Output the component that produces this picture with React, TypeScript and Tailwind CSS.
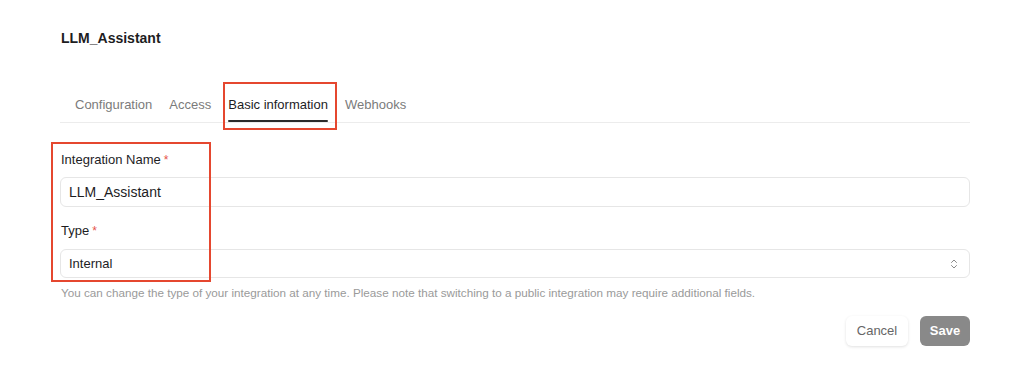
import React from "react";
import { ChevronsUpDown } from "lucide-react";

const font = { fontFamily: '"Liberation Sans", Arial, sans-serif' };

export default function App() {
  const tabs = ["Configuration", "Access", "Basic information", "Webhooks"];
  return (
    <div className="w-[1024px] h-[386px] bg-white text-[#1d1d1f] overflow-hidden" style={font}>
      <div className="pl-[60px] pr-[54px] pt-[28px]">
        <div className="text-[14px] leading-[20px] font-bold pl-[1px]">LLM_Assistant</div>

        <div className="mt-[48px] flex gap-[17px] pl-[15px] border-b border-[#ececec]">
          {tabs.map((t) => {
            const active = t === "Basic information";
            return (
              <div key={t} className="relative flex flex-col items-stretch">
                <span
                  className={
                    "text-[13px] leading-[18px] " +
                    (active ? "text-[#1d1d1f]" : "text-[#7b7b7b]")
                  }
                >
                  {t}
                </span>
                <span
                  className={
                    "mt-[6px] h-[2px] rounded-full " + (active ? "bg-[#2b2b2b]" : "bg-transparent")
                  }
                />
                {active && (
                  <span className="absolute left-[-5px] right-[-9px] top-[-14px] bottom-[-8px] border-2 border-[#e5472f]" />
                )}
              </div>
            );
          })}
        </div>

        <div className="relative mt-[28px]">
          <span className="absolute left-[-9px] top-[-9px] w-[160px] h-[140px] border-2 border-[#e5472f] pointer-events-none" />
          <div className="text-[13px] leading-[18px] pl-[1px]">
            Integration Name<span className="text-[#e5534b] ml-[3px] text-[12px] align-top">*</span>
          </div>
          <div className="mt-[8px] h-[30px] rounded-[6px] border border-[#e6e6e6] flex items-center px-[8px] text-[14px]">
            LLM_Assistant
          </div>
          <div className="mt-[15px] text-[13px] leading-[18px] pl-[1px]">
            Type<span className="text-[#e5534b] ml-[3px] text-[12px] align-top">*</span>
          </div>
          <div className="mt-[9px] h-[29px] rounded-[6px] border border-[#e6e6e6] flex items-center justify-between px-[8px] text-[13px]">
            <span>Internal</span>
            <ChevronsUpDown size={12} strokeWidth={2} className="text-[#8a8a8a] mr-[1px]" />
          </div>
          <div className="mt-[8px] text-[11.7px] leading-[14px] text-[#9a9a9a] pl-[1px]">
            You can change the type of your integration at any time. Please note that switching to a public integration may require additional fields.
          </div>
          <div className="mt-[16px] flex justify-end gap-[12px]">
            <button className="h-[30px] w-[62px] rounded-[6px] bg-white shadow-[0_1px_3px_rgba(0,0,0,0.12)] text-[13px] text-[#666]">
              Cancel
            </button>
            <button className="h-[30px] w-[50px] rounded-[6px] bg-[#898989] text-white text-[13px] font-bold">
              Save
            </button>
          </div>
        </div>
      </div>
    </div>
  );
}
